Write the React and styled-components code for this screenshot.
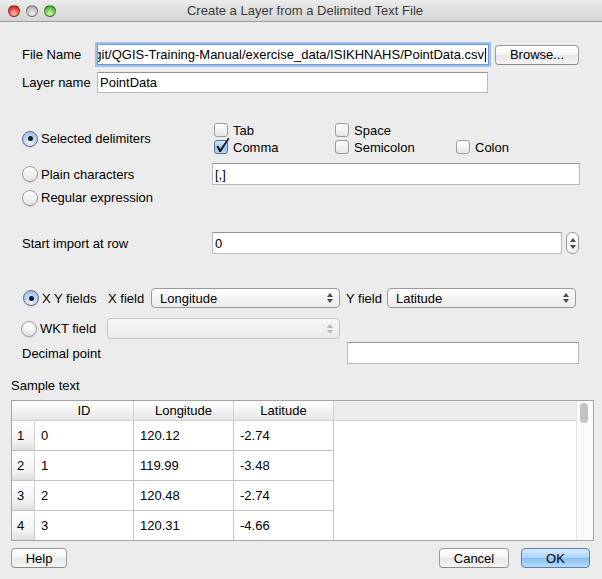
import React from 'react';
import styled, { createGlobalStyle, css } from 'styled-components';

const GlobalStyle = createGlobalStyle`
  html, body {
    margin: 0;
    padding: 0;
    background: #ececec;
  }
  body {
    font-family: "Liberation Sans", Arial, sans-serif;
    font-size: 13px;
    color: #000;
  }
`;

const Window = styled.div`
  width: 602px;
  height: 579px;
  display: flex;
  flex-direction: column;
  background: #ececec;
  overflow: hidden;
`;

const TitleBar = styled.div`
  flex: none;
  height: 22px;
  box-sizing: border-box;
  display: grid;
  grid-template-columns: 1fr auto 1fr;
  align-items: center;
  background: linear-gradient(#ececec, #d4d4d4);
  border-bottom: 1px solid #9d9d9d;
  padding-left: 8px;
`;

const Lights = styled.div`
  display: flex;
  gap: 6px;
`;

const lightColors = {
  red: ['#ffc4bb', '#ea4b3f', '#a8140b'],
  gray: ['#f4f4f4', '#c4c4c4', '#8e8e8e'],
  green: ['#d8f7bf', '#69c847', '#327f18'],
};

const Light = styled.span`
  width: 12px;
  height: 12px;
  border-radius: 50%;
  box-sizing: border-box;
  border: 1px solid rgba(0, 0, 0, 0.35);
  background: ${(p) =>
    `radial-gradient(circle at 50% 75%, ${lightColors[p.$c][0]}, ${lightColors[p.$c][1]} 55%, ${lightColors[p.$c][2]})`};
`;

const Title = styled.div`
  color: #3a3a3a;
  font-size: 13px;
`;

const Section = styled.div`
  display: flex;
  flex-direction: column;
  margin-top: ${(p) => p.$top}px;
`;

const Row = styled.div`
  display: flex;
  align-items: center;
  height: ${(p) => p.$h}px;
  margin-top: ${(p) => p.$top || 0}px;
  padding-left: ${(p) => p.$left || 0}px;
`;

const Label = styled.span`
  flex: none;
  width: ${(p) => (p.$w ? `${p.$w}px` : 'auto')};
  white-space: nowrap;
`;

const TextInput = styled.div`
  flex: none;
  width: ${(p) => p.$w}px;
  height: ${(p) => p.$h || 22}px;
  box-sizing: border-box;
  background: #fff;
  border: 1px solid #b9b9b9;
  border-top-color: #959595;
  display: flex;
  align-items: center;
  padding: 0 2px;
  overflow: hidden;
  white-space: nowrap;
  ${(p) =>
    p.$focused &&
    css`
      justify-content: flex-end;
      border-color: #6f9ad3;
      box-shadow: 0 0 0 2px #9cc3ef;
    `}
`;

const Caret = styled.span`
  width: 1px;
  height: 14px;
  background: #000;
  margin-left: 1px;
  flex: none;
`;

const PushButton = styled.div`
  flex: none;
  width: ${(p) => p.$w}px;
  height: 20px;
  box-sizing: border-box;
  border-radius: 4px;
  border: 1px solid #9c9c9c;
  border-bottom-color: #8a8a8a;
  background: linear-gradient(#ffffff, #f3f3f3 50%, #e8e8e8 51%, #f4f4f4);
  display: flex;
  align-items: center;
  justify-content: center;
  margin-left: ${(p) => p.$gap || 0}px;
  ${(p) =>
    p.$default &&
    css`
      border-color: #5680b8;
      background: linear-gradient(#d9ecfd, #a9d2f6 50%, #86c0f3 51%, #b7dcfb);
    `}
`;

const RadioWrap = styled.div`
  flex: none;
  width: ${(p) => p.$w}px;
  display: flex;
  align-items: center;
  gap: 3px;
  white-space: nowrap;
`;

const RadioDot = styled.span`
  flex: none;
  width: 16px;
  height: 16px;
  border-radius: 50%;
  box-sizing: border-box;
  display: flex;
  align-items: center;
  justify-content: center;
  border: 1px solid ${(p) => (p.$on ? '#5d6f94' : '#9b9b9b')};
  background: ${(p) =>
    p.$on
      ? 'radial-gradient(circle at 50% 80%, #e4f1ff, #a9c8ec 70%, #8fb3e0)'
      : 'linear-gradient(#ffffff, #f0f0f0 60%, #e2e2e2)'};
  box-shadow: 0 1px 1px rgba(0, 0, 0, 0.12);

  &::after {
    content: '';
    display: ${(p) => (p.$on ? 'block' : 'none')};
    width: 5px;
    height: 5px;
    border-radius: 50%;
    background: #151515;
  }
`;

const Radio = ({ on, w, children }) => (
  <RadioWrap $w={w}>
    <RadioDot $on={on} />
    <span>{children}</span>
  </RadioWrap>
);

const DelimGrid = styled.div`
  display: grid;
  grid-template-columns: 190px 1fr;
  padding-left: 22px;
`;

const ChecksGrid = styled.div`
  display: grid;
  grid-template-columns: 121px 121px auto;
  grid-template-rows: 16px 16px;
  row-gap: 1px;
  padding-left: 2px;
  align-self: center;
`;

const CheckItem = styled.div`
  display: flex;
  align-items: center;
  gap: 5px;
  white-space: nowrap;
`;

const CheckBox = styled.span`
  position: relative;
  flex: none;
  width: 14px;
  height: 14px;
  box-sizing: border-box;
  border-radius: 3px;
  border: 1px solid ${(p) => (p.$on ? '#5d6f94' : '#9d9d9d')};
  background: ${(p) =>
    p.$on
      ? 'linear-gradient(#d6e8fb, #9cc2ec 55%, #b9d6f4)'
      : 'linear-gradient(#ffffff, #f1f1f1 60%, #e4e4e4)'};
`;

const CheckMark = styled.svg`
  position: absolute;
  left: 0;
  top: -5px;
  overflow: visible;
`;

const Check = ({ on, children }) => (
  <CheckItem>
    <CheckBox $on={on}>
      {on && (
        <CheckMark width="16" height="18" viewBox="0 0 16 18">
          <path d="M1.5 10.5 L4.5 16 L5.8 16 L14.5 2.5 L13.2 1.8 L5.2 13.2 L3.2 9.4 Z" fill="#111" />
        </CheckMark>
      )}
    </CheckBox>
    <span>{children}</span>
  </CheckItem>
);

const Spinner = styled.div`
  flex: none;
  width: 13px;
  height: 22px;
  box-sizing: border-box;
  margin-left: 4px;
  border-radius: 6px;
  border: 1px solid #9a9a9a;
  background: linear-gradient(#ffffff, #eeeeee);
  display: flex;
  flex-direction: column;
  align-items: center;
  justify-content: center;
  gap: 3px;
`;

const Tri = styled.span`
  width: 0;
  height: 0;
  border-left: 3px solid transparent;
  border-right: 3px solid transparent;
  ${(p) =>
    p.$down
      ? css`border-top: 4px solid ${p.$dim ? '#b8b8b8' : '#4a4a4a'};`
      : css`border-bottom: 4px solid ${p.$dim ? '#b8b8b8' : '#4a4a4a'};`}
`;

const Combo = styled.div`
  flex: none;
  width: ${(p) => p.$w}px;
  height: ${(p) => p.$h || 20}px;
  box-sizing: border-box;
  border-radius: 4px;
  border: 1px solid ${(p) => (p.$disabled ? '#c6c6c6' : '#9b9b9b')};
  background: ${(p) =>
    p.$disabled ? 'linear-gradient(#f6f6f6, #ebebeb)' : 'linear-gradient(#ffffff, #f4f4f4 50%, #ececec)'};
  display: flex;
  align-items: center;
  justify-content: space-between;
  padding: 0 6px 0 8px;
`;

const Arrows = styled.span`
  display: flex;
  flex-direction: column;
  gap: 2px;
`;

const ComboBox = ({ w, h, disabled, children }) => (
  <Combo $w={w} $h={h} $disabled={disabled}>
    <span>{children}</span>
    <Arrows>
      <Tri $dim={disabled} />
      <Tri $down $dim={disabled} />
    </Arrows>
  </Combo>
);

const SampleLabel = styled.div`
  margin-top: 14px;
  height: 16px;
  line-height: 16px;
  padding-left: 11px;
`;

const TableBox = styled.div`
  margin: 6px 8px 0 11px;
  height: 141px;
  box-sizing: border-box;
  border: 1px solid #a4a4a4;
  display: grid;
  grid-template-columns: 1fr 17px;
  background: #fff;
  overflow: hidden;
`;

const TableGrid = styled.div`
  display: grid;
  grid-template-columns: 23px 99px 100px 100px 1fr;
  grid-template-rows: 20px repeat(4, 30px);
  align-content: start;
`;

const HeadCell = styled.div`
  background: linear-gradient(#ffffff, #f1f1f1 60%, #e6e6e6);
  border-right: ${(p) => (p.$noLine ? 'none' : '1px solid #d0d0d0')};
  border-bottom: 1px solid #cfcfcf;
  display: flex;
  align-items: center;
  justify-content: center;
  ${(p) =>
    p.$filler &&
    css`
      background: #ececec;
      border-right: none;
    `}
`;

const RowHead = styled.div`
  background: linear-gradient(#ffffff, #f2f2f2 70%, #dedede);
  border-right: 1px solid #d2d2d2;
  border-bottom: 1px solid #c2c2c2;
  display: flex;
  align-items: center;
  padding-left: 5px;
`;

const Cell = styled.div`
  border-right: 1px solid #c4c4c4;
  border-bottom: 1px solid #c4c4c4;
  display: flex;
  align-items: center;
  padding-left: 6px;
`;

const Blank = styled.div`
  background: #fff;
`;

const ScrollTrack = styled.div`
  background: #fafafa;
  border-left: 1px solid #e4e4e4;
  padding: 2px 0 0 3px;
`;

const Thumb = styled.div`
  width: 8px;
  height: 20px;
  border-radius: 4px;
  background: #c3c3c3;
`;

const ButtonBar = styled.div`
  margin-top: 7px;
  display: flex;
  align-items: center;
  padding: 0 12px 0 11px;
`;

const Spacer = styled.div`
  flex: 1;
`;

const rows = [
  ['1', '0', '120.12', '-2.74'],
  ['2', '1', '119.99', '-3.48'],
  ['3', '2', '120.48', '-2.74'],
  ['4', '3', '120.31', '-4.66'],
];

export default function App() {
  return (
    <>
      <GlobalStyle />
      <Window>
        <TitleBar>
          <Lights>
            <Light $c="red" />
            <Light $c="gray" />
            <Light $c="green" />
          </Lights>
          <Title>Create a Layer from a Delimited Text File</Title>
          <div />
        </TitleBar>

        <Section $top={22}>
          <Row $h={21} $left={22}>
            <Label $w={75}>File Name</Label>
            <TextInput $w={392} $h={21} $focused>
              <span>git/QGIS-Training-Manual/exercise_data/ISIKHNAHS/PointData.csv</span>
              <Caret />
            </TextInput>
            <PushButton $w={84} $gap={6}>Browse...</PushButton>
          </Row>
          <Row $h={21} $top={7} $left={22}>
            <Label $w={75}>Layer name</Label>
            <TextInput $w={391} $h={21}>PointData</TextInput>
          </Row>
        </Section>

        <Section $top={29}>
          <DelimGrid>
            <Row $h={33}>
              <Radio on w={190}>Selected delimiters</Radio>
            </Row>
            <ChecksGrid>
              <Check>Tab</Check>
              <Check>Space</Check>
              <div />
              <Check on>Comma</Check>
              <Check>Semicolon</Check>
              <Check>Colon</Check>
            </ChecksGrid>
          </DelimGrid>
          <Row $h={22} $top={8} $left={22}>
            <Radio w={190}>Plain characters</Radio>
            <TextInput $w={368}>[,]</TextInput>
          </Row>
          <Row $h={21} $top={2} $left={22}>
            <Radio w={190}>Regular expression</Radio>
          </Row>
        </Section>

        <Section $top={24}>
          <Row $h={22} $left={22}>
            <Label $w={190}>Start import at row</Label>
            <TextInput $w={350}>0</TextInput>
            <Spinner>
              <Tri />
              <Tri $down />
            </Spinner>
          </Row>
        </Section>

        <Section $top={34}>
          <Row $h={20} $left={23}>
            <Radio on w={85}>X Y fields</Radio>
            <Label $w={43}>X field</Label>
            <ComboBox w={189}>Longitude</ComboBox>
            <Label $w={47} style={{ paddingLeft: 6, boxSizing: 'border-box' }}>Y field</Label>
            <ComboBox w={189}>Latitude</ComboBox>
          </Row>
          <Row $h={21} $top={10} $left={21}>
            <Radio w={86}>WKT field</Radio>
            <ComboBox w={233} h={21} disabled />
          </Row>
          <Row $h={22} $top={3} $left={22}>
            <Label $w={325}>Decimal point</Label>
            <TextInput $w={232}></TextInput>
          </Row>
        </Section>

        <SampleLabel>Sample text</SampleLabel>
        <TableBox>
          <TableGrid>
            <HeadCell $noLine />
            <HeadCell>ID</HeadCell>
            <HeadCell>Longitude</HeadCell>
            <HeadCell>Latitude</HeadCell>
            <HeadCell $filler />
            {rows.map((r) => (
              <React.Fragment key={r[0]}>
                <RowHead>{r[0]}</RowHead>
                <Cell>{r[1]}</Cell>
                <Cell>{r[2]}</Cell>
                <Cell>{r[3]}</Cell>
                <Blank />
              </React.Fragment>
            ))}
          </TableGrid>
          <ScrollTrack>
            <Thumb />
          </ScrollTrack>
        </TableBox>

        <ButtonBar>
          <PushButton $w={56}>Help</PushButton>
          <Spacer />
          <PushButton $w={70}>Cancel</PushButton>
          <PushButton $w={69} $gap={12} $default>OK</PushButton>
        </ButtonBar>
      </Window>
    </>
  );
}
